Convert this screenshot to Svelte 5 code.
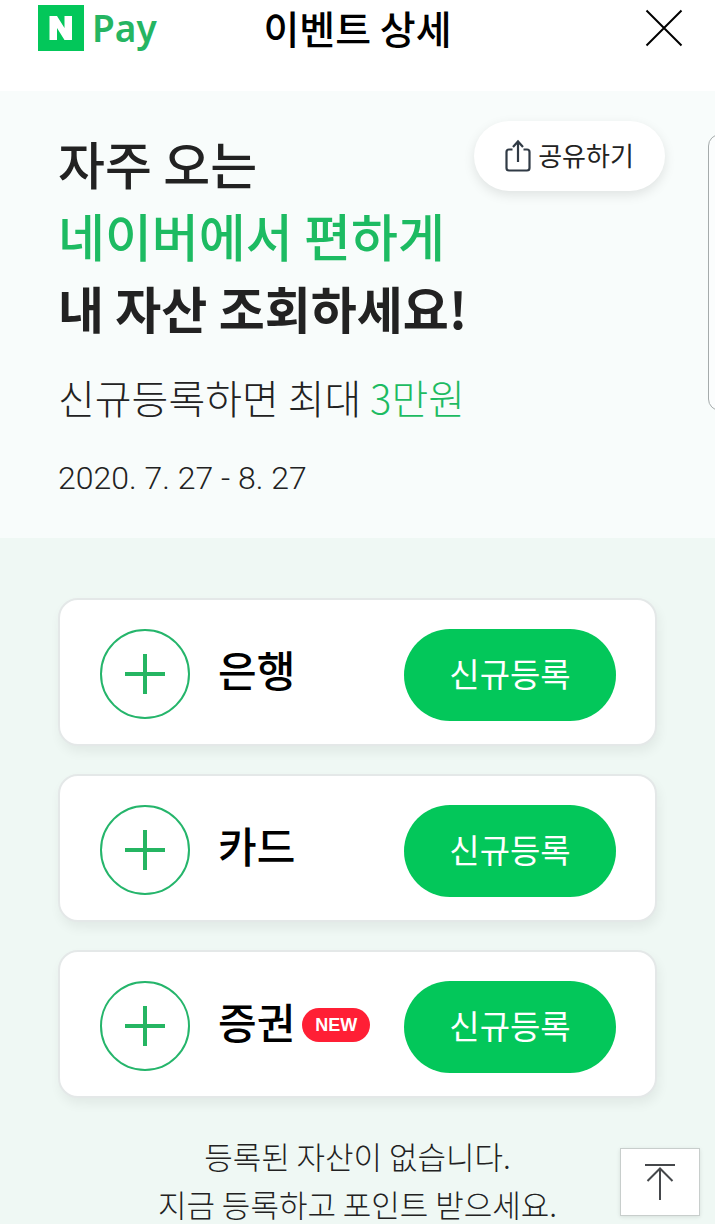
<script>
  const assets = [
    { id: 'bank', name: '은행', isNew: false },
    { id: 'card', name: '카드', isNew: false },
    { id: 'stock', name: '증권', isNew: true }
  ];

  function scrollToTop() {
    window.scrollTo({ top: 0, behavior: 'smooth' });
  }
</script>

<div class="page">
  <header class="header">
    <a href="#home" class="logo" aria-label="N Pay">
      <span class="logo-mark">
        <svg width="46" height="46" viewBox="0 0 46 46" aria-hidden="true">
          <path d="M11.500 11h7.500l7.500 12V11H34v24h-7.500L19 23v12h-7.500z" fill="#fff" />
        </svg>
      </span>
      <span class="logo-text">Pay</span>
    </a>
    <h1 class="header-title">이벤트 상세</h1>
    <button class="close-button" aria-label="닫기">
      <svg width="38" height="38" viewBox="0 0 38 38" aria-hidden="true">
        <path d="M1.5 1.5l35 35M36.5 1.5l-35 35" stroke="#000" stroke-width="2" />
      </svg>
    </button>
  </header>

  <section class="hero">
    <div class="hero-top">
      <h2 class="hero-title">
        <span class="line">자주 오는</span>
        <span class="line green">네이버에서 편하게</span>
        <span class="line bold">내 자산 조회하세요!</span>
      </h2>
      <button class="share-button">
        <svg width="26" height="34" viewBox="0 0 26 34" fill="none" stroke="#303a45" stroke-width="2.2" aria-hidden="true">
          <path d="M7.5 10.5H4a2.5 2.5 0 0 0-2.5 2.5v16A2.5 2.5 0 0 0 4 31.500h18a2.500 2.500 0 0 0 2.500-2.500V13a2.500 2.500 0 0 0-2.500-2.500h-3.500" />
          <path d="M13 23V3M8 8l5-5.500L18 8" />
        </svg>
        <span class="share-label">공유하기</span>
      </button>
    </div>
    <p class="hero-sub">신규등록하면 최대 <span class="green">3만원</span></p>
    <p class="hero-date">2020. 7. 27 - 8. 27</p>
  </section>

  <main class="content">
    <ul class="asset-list">
      {#each assets as asset (asset.id)}
        <li class="asset-card">
          <svg class="plus" width="90" height="90" viewBox="0 0 90 90" aria-hidden="true">
            <circle cx="45" cy="45" r="44" fill="none" stroke="#25b56b" stroke-width="2" />
            <path d="M25 45h40M45 25v40" stroke="#25b562" stroke-width="4" />
          </svg>
          <span class="asset-name">{asset.name}</span>
          {#if asset.isNew}
            <span class="badge">NEW</span>
          {/if}
          <button class="register-button">신규등록</button>
        </li>
      {/each}
    </ul>
    <p class="message">등록된 자산이 없습니다.<br />지금 등록하고 포인트 받으세요.</p>
  </main>

  <div class="edge-panel"></div>

  <button class="top-button" aria-label="맨 위로" onclick={scrollToTop}>
    <svg width="32" height="38" viewBox="0 0 32 38" fill="none" stroke="#45484b" stroke-width="2" aria-hidden="true">
      <path d="M1 2h30M16 37V6M3.500 18L16 5.500 28.500 18" />
    </svg>
  </button>
</div>

<style>
  :global(body) {
    background: #eff8f4;
  }

  .page {
    font-family: 'Noto Sans CJK KR', sans-serif;
    color: #222;
    min-height: 100vh;
    overflow: hidden;
  }

  h1, h2, p, ul {
    margin: 0;
    padding: 0;
  }

  button {
    font-family: inherit;
    cursor: pointer;
    border: none;
    padding: 0;
  }

  svg {
    display: block;
    flex: none;
  }

  .green {
    color: #1dbb62;
  }

  .header {
    display: grid;
    grid-template-columns: 1fr auto 1fr;
    align-items: center;
    padding: 4px 32px 40px;
    background: #fff;
  }

  .logo {
    display: flex;
    align-items: center;
    gap: 8px;
    padding-left: 6px;
    text-decoration: none;
  }

  .logo-mark {
    background: #03c75a;
  }

  .logo-text {
    font-family: 'Noto Sans', sans-serif;
    font-size: 37px;
    line-height: 46px;
    font-weight: 600;
    color: #25b562;
  }

  .header-title {
    font-size: 39px;
    line-height: 47px;
    font-weight: 500;
    color: #000;
  }

  .close-button {
    justify-self: end;
    background: none;
  }

  .hero {
    padding: 30px 50px 36px 58px;
    background: #f8fcfb;
  }

  .hero-top {
    display: flex;
    justify-content: space-between;
    align-items: flex-start;
  }

  .hero-title {
    padding-top: 6px;
    margin-right: -200px;
    font-size: 51px;
    line-height: 72px;
    font-weight: 500;
    white-space: nowrap;
  }

  .line {
    display: block;
  }

  .line.bold {
    font-size: 50px;
    font-weight: 700;
  }

  .share-button {
    display: flex;
    align-items: center;
    justify-content: center;
    gap: 7px;
    width: 191px;
    height: 70px;
    border-radius: 35px;
    background: #fff;
    color: #222;
    font-size: 26px;
    box-shadow: 0 4px 12px rgba(0, 0, 0, 0.1);
  }

  .share-label {
    padding-bottom: 4px;
  }

  .hero-sub {
    margin-top: 24px;
    font-size: 40px;
    line-height: 60px;
    font-weight: 300;
  }

  .hero-date {
    margin-top: 27px;
    font-family: Roboto, sans-serif;
    font-size: 32px;
    line-height: 48px;
    font-weight: 300;
  }

  .content {
    padding: 60px 58px 0;
    background: #eff8f4;
  }

  .asset-list {
    display: flex;
    flex-direction: column;
    gap: 28px;
    list-style: none;
  }

  .asset-card {
    display: flex;
    align-items: flex-start;
    padding: 29px 39px 23px 40px;
    border: 2px solid #e4e8e8;
    border-radius: 20px;
    background: #fff;
    box-shadow: 2px 6px 12px rgba(0, 0, 0, 0.06);
  }

  .asset-name {
    margin-left: 28px;
    font-size: 42px;
    line-height: 80px;
    font-weight: 500;
    color: #000;
  }

  .badge {
    margin: 27px 0 0 7px;
    padding: 0 13px;
    border-radius: 17px;
    background: #ff1f35;
    color: #fff;
    font-family: 'Liberation Sans', sans-serif;
    font-size: 18px;
    line-height: 34px;
    font-weight: 700;
  }

  .register-button {
    margin-left: auto;
    padding-bottom: 4px;
    width: 212px;
    height: 92px;
    border-radius: 46px;
    background: #03c75a;
    color: #fff;
    font-size: 33px;
    font-weight: 400;
  }

  .message {
    margin-top: 34px;
    font-size: 31px;
    line-height: 48px;
    font-weight: 300;
    text-align: center;
  }

  .edge-panel {
    position: fixed;
    top: 134px;
    right: -20px;
    width: 25px;
    height: 275px;
    border: 1px solid #a5abab;
    border-radius: 12px;
    background: #fbfdfd;
  }

  .top-button {
    position: fixed;
    right: 15px;
    bottom: 8px;
    display: flex;
    align-items: center;
    justify-content: center;
    width: 80px;
    height: 68px;
    border: 1px solid #c8cecc;
    background: #fff;
    box-shadow: 0 1px 4px rgba(0, 0, 0, 0.1);
  }
</style>
